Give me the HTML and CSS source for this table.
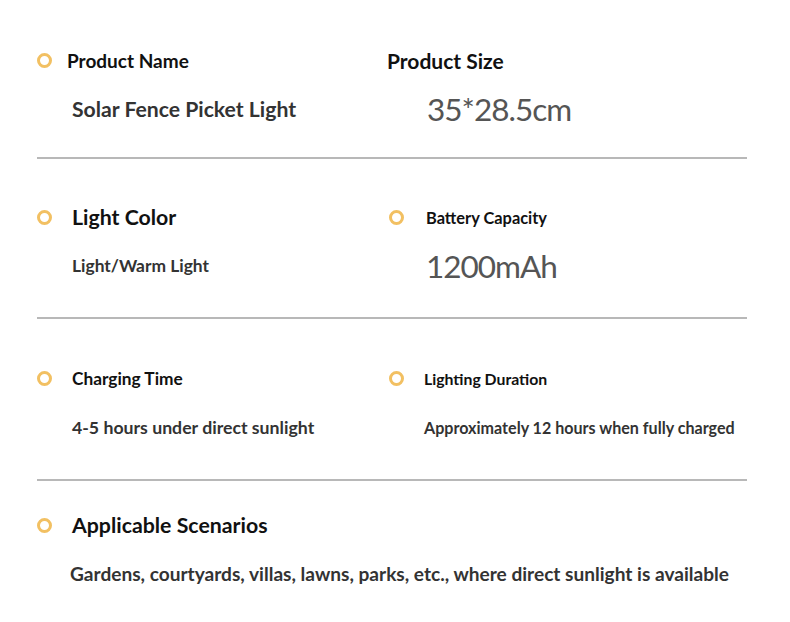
FILE: index.html
```html
<!DOCTYPE html>
<html lang="en">
<head>
    <meta charset="UTF-8">
    <meta name="viewport" content="width=device-width, initial-scale=1.0">
    <title>Product Specifications</title>
    <link rel="stylesheet" href="styles.css">
</head>
<body>

<div class="specs">
    <section class="spec-row first">
        <div class="spec">
            <div class="label label-md tight"><span class="dot"></span>Product Name</div>
            <div class="value value-lg">Solar Fence Picket Light</div>
        </div>
        <div class="spec right">
            <div class="label label-lg"><span class="dot hidden"></span>Product Size</div>
            <div class="value number shift">35*28.5cm</div>
        </div>
    </section>

    <section class="spec-row second">
        <div class="spec">
            <div class="label label-xl"><span class="dot"></span>Light Color</div>
            <div class="value value-sm">Light/Warm Light</div>
        </div>
        <div class="spec right">
            <div class="label label-sm"><span class="dot"></span>Battery Capacity</div>
            <div class="value number">1200mAh</div>
        </div>
    </section>

    <section class="spec-row third">
        <div class="spec">
            <div class="label label-md"><span class="dot"></span>Charging Time</div>
            <div class="value value-md">4-5 hours under direct sunlight</div>
        </div>
        <div class="spec right">
            <div class="label label-xs"><span class="dot"></span>Lighting Duration</div>
            <div class="value value-xs">Approximately 12 hours when fully charged</div>
        </div>
    </section>

    <section class="spec-row last">
        <div class="spec wide">
            <div class="label label-xl"><span class="dot"></span>Applicable Scenarios</div>
            <div class="value value-wide">Gardens, courtyards, villas, lawns, parks, etc., where direct sunlight is available</div>
        </div>
    </section>
</div>

</body>
</html>
```

FILE: styles.css
```css
body, html {
    margin: 0;
    padding: 0;
    background-color: #ffffff;
    font-family: Lato, "Noto Sans", sans-serif;
    color: #111;
}
.specs {
    width: 710px;
    margin-left: 37px;
}
.spec-row {
    display: grid;
    grid-template-columns: 350px 1fr;
    padding: 46px 0 34px;
    border-bottom: 2px solid #b8b8b8;
}
.spec-row.first {
    padding-top: 48px;
    padding-bottom: 30px;
}
.spec-row.second {
    padding-bottom: 33px;
}
.spec-row.third {
    padding-top: 47px;
}
.spec-row.third .value {
    margin-top: 20px;
}
.spec-row.third {
    padding-bottom: 33px;
}
.spec-row.last {
    border-bottom: none;
    padding-top: 32px;
}
.spec.wide {
    grid-column: 1 / 3;
}
.label {
    display: flex;
    align-items: center;
    height: 24px;
    font-weight: 700;
    color: #111;
}
.dot {
    width: 9px;
    height: 9px;
    border: 3px solid #f2c062;
    border-radius: 50%;
    margin-right: 20px;
    flex-shrink: 0;
}
.right .dot {
    margin-left: 2px;
}
.dot.hidden {
    display: none;
}
.label.tight .dot {
    margin-right: 15px;
}
.label-sm .dot {
    margin-right: 22px;
}
.label-xs .dot {
    margin-right: 20px;
}
.label-xs {
    font-size: 15.8px;
}
.label-sm {
    font-size: 16.4px;
}
.label-md {
    font-size: 19px;
}
.label-lg {
    font-size: 21px;
}
.label-xl {
    font-size: 21.3px;
}
.label-md:not(.tight) {
    font-size: 17.3px;
}
.value {
    height: 36px;
    line-height: 36px;
    margin-top: 19px;
    padding-left: 35px;
    font-weight: 700;
    color: #333;
    white-space: nowrap;
}
.right .value-xs {
    padding-left: 37px;
}
.value-lg {
    font-size: 21.2px;
}
.value-md {
    font-size: 17.7px;
}
.value-sm {
    font-size: 17.4px;
}
.value-xs {
    font-size: 16.1px;
}
.value-wide {
    font-size: 19.1px;
    padding-left: 33px;
}
.number {
    font-size: 31.5px;
    font-weight: 400;
    color: #555;
    letter-spacing: -1px;
    padding-left: 39px;
}
.number.shift {
    padding-left: 40px;
}
```
